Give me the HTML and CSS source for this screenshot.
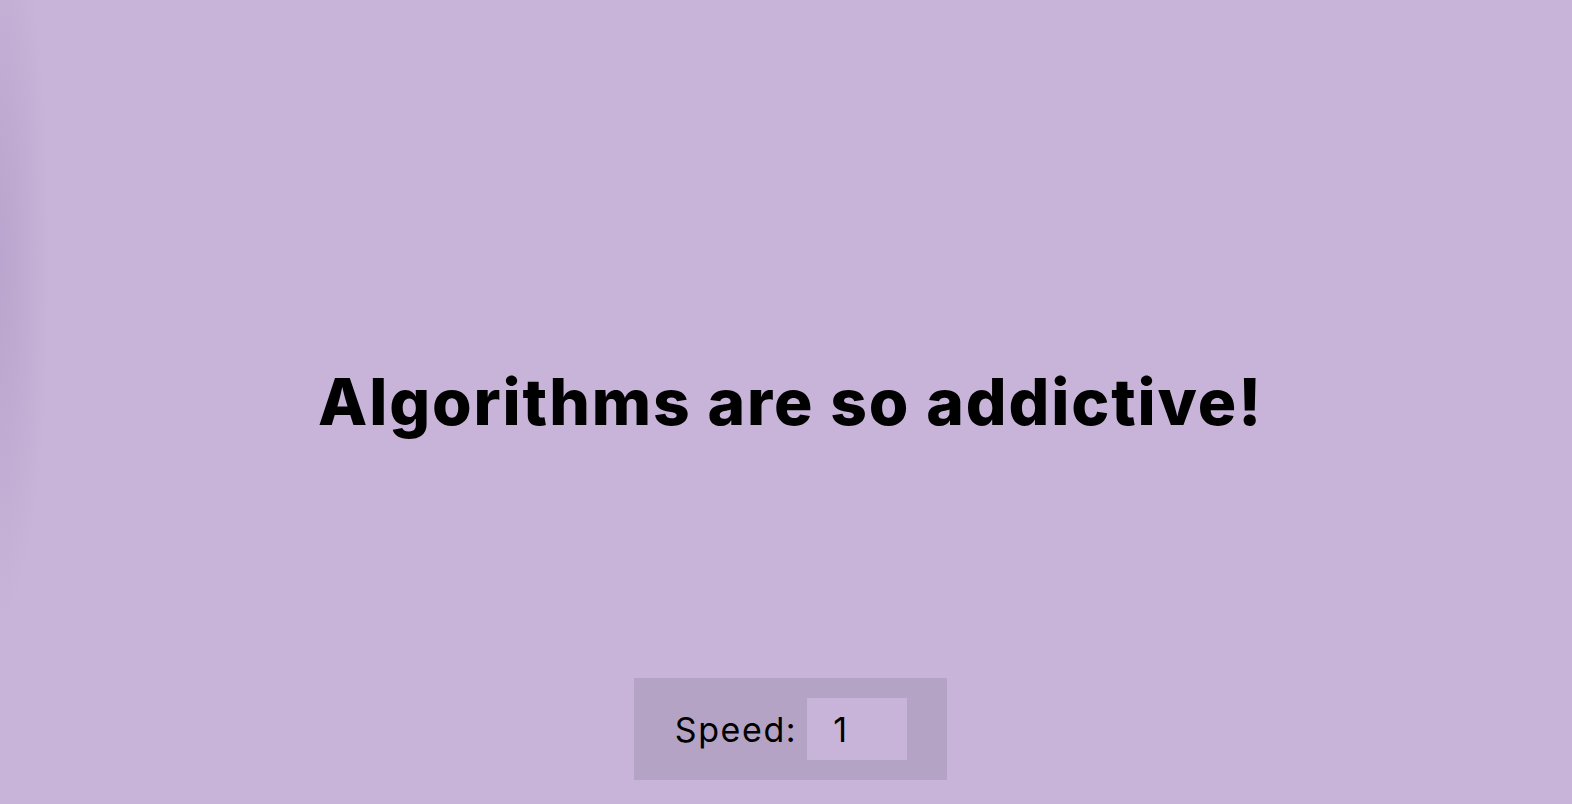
FILE: index.html
```html
<!DOCTYPE html>
<html lang="en">
<head>
<meta charset="utf-8">
<title>Algorithms</title>
<link rel="stylesheet" href="styles.css">
</head>
<body>
<div class="page">
  <div class="spacer"></div>
  <h1 class="title">Algorithms are so addictive!</h1>
  <div class="bottom">
    <div class="panel">
      <label class="label" for="speed">Speed:</label>
      <input class="speed" id="speed" type="text" value="1">
    </div>
  </div>
</div>
</body>
</html>
```
FILE: styles.css
```css
html, body {
  margin: 0;
  padding: 0;
  height: 100%;
}
body {
  background: #c8b4d8;
  font-family: Inter, "Open Sans", sans-serif;
  color: #000;
  overflow: hidden;
}
.page {
  position: relative;
  box-sizing: border-box;
  height: 804px;
  padding-left: 9px;
  display: grid;
  grid-template-rows: 1fr auto 1fr;
  justify-items: center;
}
.page::before {
  content: "";
  position: absolute;
  left: 0;
  top: 0;
  width: 60px;
  height: 640px;
  background: radial-gradient(ellipse 50px 360px at 0 260px, rgba(150, 130, 180, 0.3), rgba(150, 130, 180, 0));
  pointer-events: none;
}
.title {
  margin: 0;
  font-size: 64px;
  font-weight: 800;
  line-height: 1;
  letter-spacing: 1.9px;
}
.bottom {
  align-self: end;
  padding-bottom: 24px;
}
.panel {
  display: flex;
  align-items: center;
  gap: 10px;
  padding: 20px 40px 20px 41px;
  background: #b4a3c4;
}
.label {
  font-size: 34px;
  font-weight: 400;
  letter-spacing: 1.6px;
}
.speed {
  box-sizing: border-box;
  width: 100px;
  height: 62px;
  border: none;
  outline: none;
  background: #c8b4d8;
  font-family: inherit;
  font-size: 34px;
  padding: 0 0 0 26px;
  color: #000;
}
```
